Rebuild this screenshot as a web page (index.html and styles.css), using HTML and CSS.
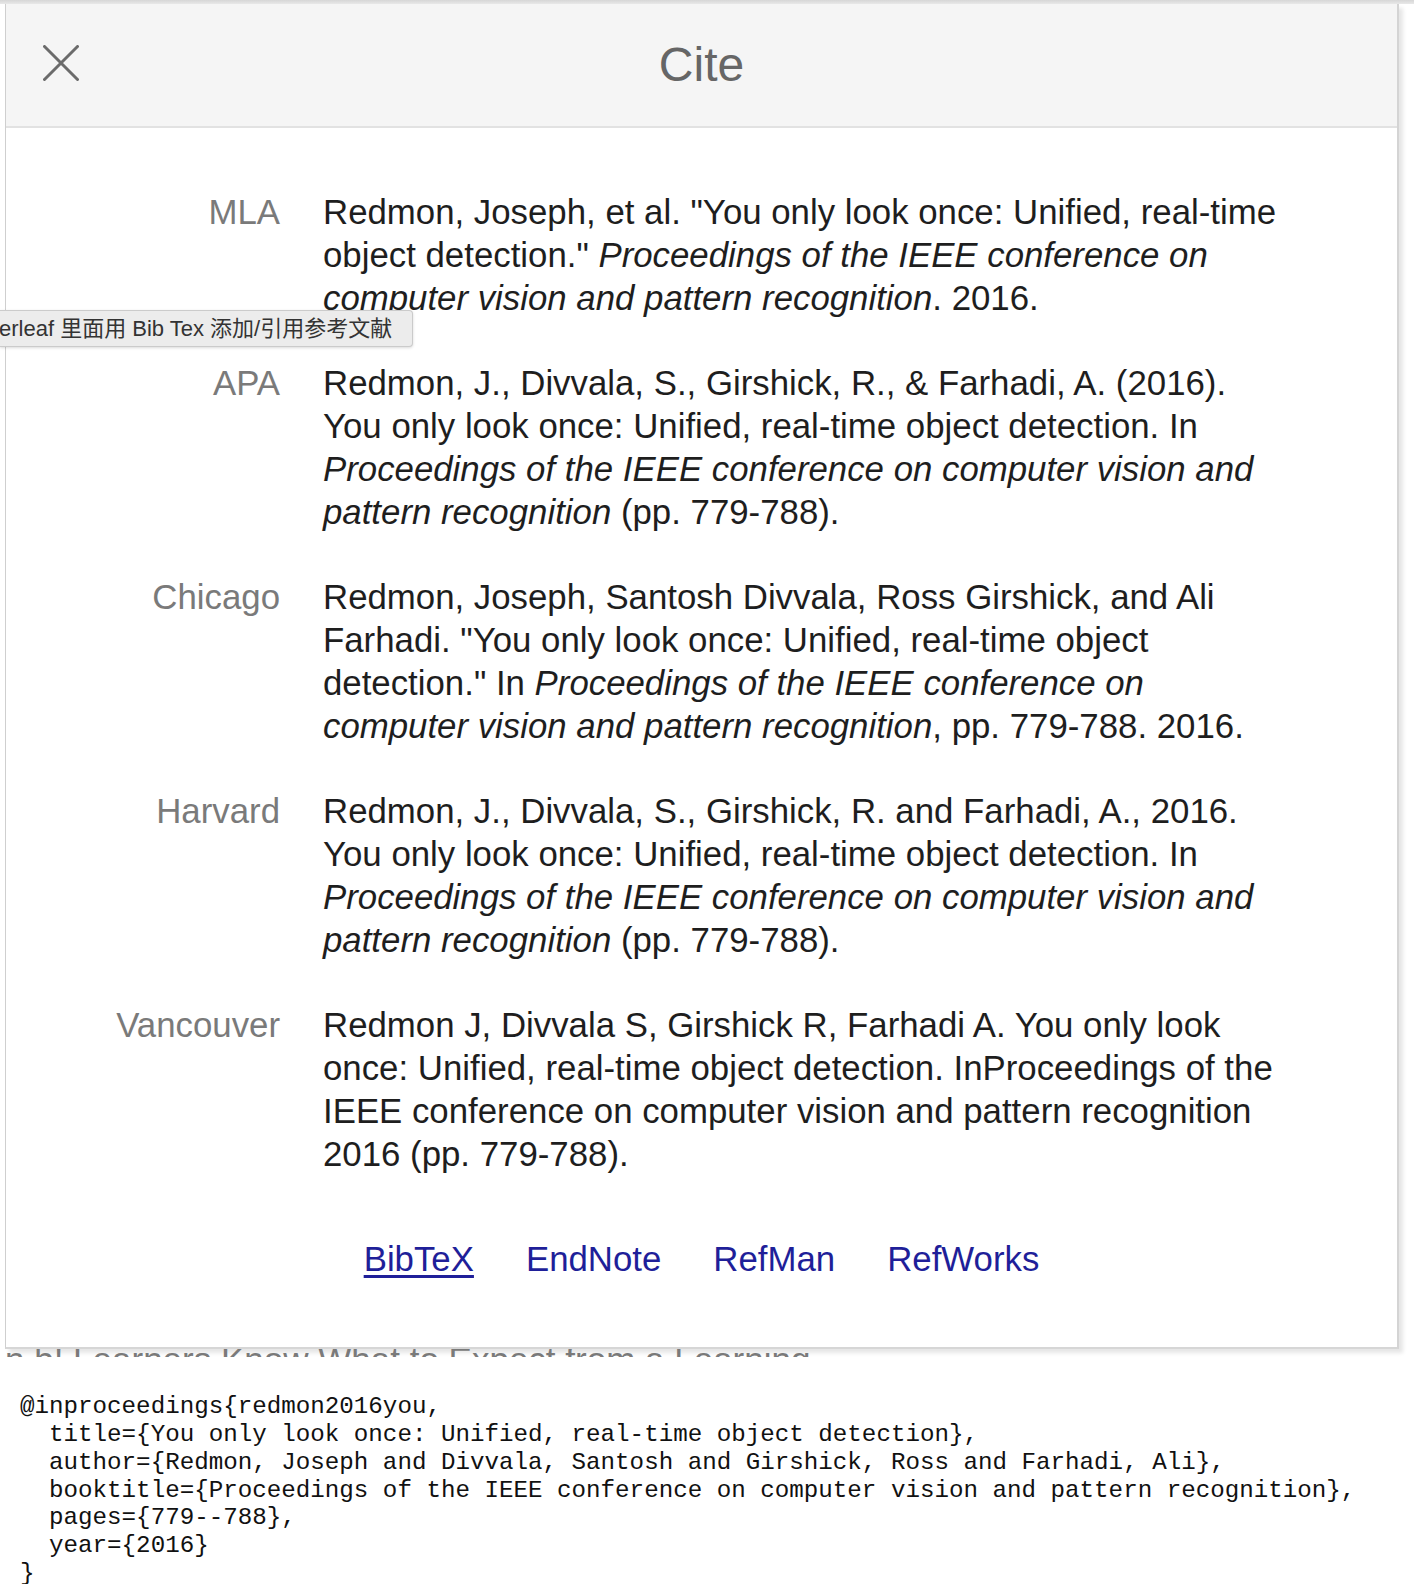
FILE: index.html
```html
<!DOCTYPE html>
<html lang="en">
<head>
<meta charset="utf-8">
<title>Cite</title>
<link rel="stylesheet" href="styles.css">
</head>
<body>
<div class="topshade"></div>
<div class="dialog">
  <div class="dialog-header">
    <svg class="close-icon" width="36" height="36" viewBox="0 0 36 36" aria-hidden="true">
      <path d="M1.5 1.5 L34.5 34.5 M34.5 1.5 L1.5 34.5" stroke="#6b6b6b" stroke-width="3" stroke-linecap="round" fill="none"/>
    </svg>
    <h1 class="dialog-title">Cite</h1>
  </div>
  <div class="dialog-body">
    <div class="cite-row">
      <div class="cite-label">MLA</div>
      <div class="cite-text">Redmon, Joseph, et al. "You only look once: Unified, real-time<br>object detection." <i>Proceedings of the IEEE conference on</i><br><i>computer vision and pattern recognition</i>. 2016.</div>
    </div>
    <div class="cite-row">
      <div class="cite-label">APA</div>
      <div class="cite-text">Redmon, J., Divvala, S., Girshick, R., &amp; Farhadi, A. (2016).<br>You only look once: Unified, real-time object detection. In<br><i>Proceedings of the IEEE conference on computer vision and</i><br><i>pattern recognition</i> (pp. 779-788).</div>
    </div>
    <div class="cite-row">
      <div class="cite-label">Chicago</div>
      <div class="cite-text">Redmon, Joseph, Santosh Divvala, Ross Girshick, and Ali<br>Farhadi. "You only look once: Unified, real-time object<br>detection." In <i>Proceedings of the IEEE conference on</i><br><i>computer vision and pattern recognition</i>, pp. 779-788. 2016.</div>
    </div>
    <div class="cite-row">
      <div class="cite-label">Harvard</div>
      <div class="cite-text">Redmon, J., Divvala, S., Girshick, R. and Farhadi, A., 2016.<br>You only look once: Unified, real-time object detection. In<br><i>Proceedings of the IEEE conference on computer vision and</i><br><i>pattern recognition</i> (pp. 779-788).</div>
    </div>
    <div class="cite-row">
      <div class="cite-label">Vancouver</div>
      <div class="cite-text">Redmon J, Divvala S, Girshick R, Farhadi A. You only look<br>once: Unified, real-time object detection. InProceedings of the<br>IEEE conference on computer vision and pattern recognition<br>2016 (pp. 779-788).</div>
    </div>
    <div class="export-links">
      <a class="export-link underline" href="#">BibTeX</a>
      <a class="export-link" href="#">EndNote</a>
      <a class="export-link" href="#">RefMan</a>
      <a class="export-link" href="#">RefWorks</a>
    </div>
  </div>
  <div class="tooltip">erleaf 里面用 Bib Tex 添加/引用参考文献</div>
</div>
<div class="under-strip"><span>n b! Learners Know What to Expect from a Learning</span></div>
<pre class="bibtex">@inproceedings{redmon2016you,
  title={You only look once: Unified, real-time object detection},
  author={Redmon, Joseph and Divvala, Santosh and Girshick, Ross and Farhadi, Ali},
  booktitle={Proceedings of the IEEE conference on computer vision and pattern recognition},
  pages={779--788},
  year={2016}
}</pre>
</body>
</html>
```

FILE: styles.css
```css
html, body {
  margin: 0;
  padding: 0;
  background: #ffffff;
}

body {
  width: 1414px;
  height: 1584px;
  overflow: hidden;
  font-family: "Liberation Sans", Arial, sans-serif;
}

.topshade {
  height: 4px;
  background: linear-gradient(#d6d6d6, #e8e8e8);
}

.dialog {
  margin-left: 5px;
  width: 1391px;
  border-left: 1px solid #cfcfcf;
  border-right: 2px solid #d4d4d4;
  border-bottom: 2px solid #d6d6d6;
  background: #ffffff;
  box-shadow: 4px 4px 4px rgba(0, 0, 0, 0.10);
}

.dialog-header {
  position: relative;
  height: 122px;
  background: #f5f5f5;
  border-bottom: 2px solid #e2e2e2;
  display: flex;
  align-items: center;
  justify-content: center;
}

.close-icon {
  position: absolute;
  left: 37px;
  top: 41px;
}

.dialog-title {
  margin: 0;
  font-weight: normal;
  font-size: 48px;
  color: #666666;
  line-height: 1;
  padding-top: 0;
}

.dialog-body {
  padding: 63px 0 66px 0;
}

.cite-row {
  display: grid;
  grid-template-columns: 274px 1fr;
  column-gap: 43px;
  margin-bottom: 42.8px;
  font-size: 34.8px;
  line-height: 42.8px;
}

.cite-label {
  text-align: right;
  color: #7a7a7a;
}

.cite-text {
  color: #1e1e1e;
  white-space: nowrap;
}

.cite-text i {
  font-style: italic;
}

.export-links {
  display: flex;
  justify-content: center;
  gap: 52px;
  margin-top: 63px;
  font-size: 34.8px;
  line-height: 42.8px;
}

.export-link {
  color: #1f1f99;
  text-decoration: none;
}

.export-link.underline {
  text-decoration: underline;
  text-underline-offset: 4px;
}

.tooltip {
  position: absolute;
  left: 0;
  top: 310px;
  width: 410px;
  height: 35px;
  padding-left: 2px;
  box-sizing: content-box;
  background: #ececec;
  border: 1px solid #cbcbcb;
  border-left: none;
  border-radius: 0 4px 4px 0;
  box-shadow: 0 1px 3px rgba(0, 0, 0, 0.15);
  font-family: "Liberation Sans", "Noto Sans CJK SC", sans-serif;
  font-size: 22px;
  line-height: 35px;
  color: #333333;
  white-space: nowrap;
  overflow: hidden;
  text-indent: -3px;
}

.under-strip {
  margin-left: 5px;
  height: 8px;
  overflow: hidden;
  font-size: 35px;
  line-height: 34px;
  color: #7a7a7a;
  white-space: nowrap;
}

.under-strip span {
  display: block;
  margin-top: -6px;
}

.bibtex {
  margin: 36px 0 0 20px;
  font-family: "Liberation Mono", "Courier New", monospace;
  font-size: 24.2px;
  line-height: 27.8px;
  color: #111111;
}
```
